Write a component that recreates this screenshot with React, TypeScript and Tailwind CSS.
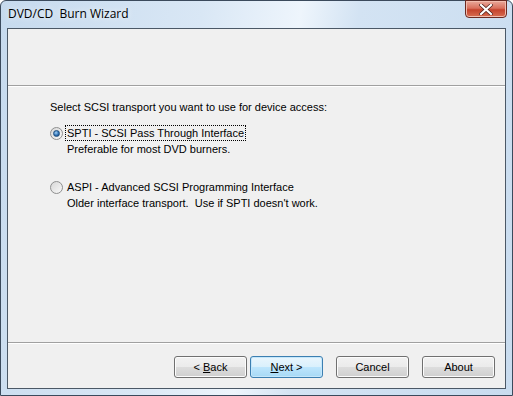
import { useState } from 'react';

type Choice = 'spti' | 'aspi';

const OPTIONS: { id: Choice; title: string; hint: string }[] = [
  {
    id: 'spti',
    title: 'SPTI - SCSI Pass Through Interface',
    hint: 'Preferable for most DVD burners.',
  },
  {
    id: 'aspi',
    title: 'ASPI - Advanced SCSI Programming Interface',
    hint: "Older interface transport.  Use if SPTI doesn't work.",
  },
];

function Radio({ checked }: { checked: boolean }) {
  return (
    <span className="relative flex h-[13px] w-[13px] shrink-0 items-center justify-center rounded-full border border-[#8e8f8f] bg-gradient-to-br from-[#d8d8d8] to-[#f8f8f8]">
      {checked && (
        <span className="h-[7px] w-[7px] rounded-full border border-[#1d4f7f] bg-[radial-gradient(circle_at_40%_35%,#9fd0f5,#2a6bb0_60%,#123e6b)]" />
      )}
    </span>
  );
}

function WizardButton({
  children,
  primary,
}: {
  children: React.ReactNode;
  primary?: boolean;
}) {
  return (
    <button
      className={`h-[22px] w-[73px] rounded-[3px] border text-[11px] text-black ${
        primary
          ? 'border-[#3c7fb1] bg-[linear-gradient(#eaf6fd_0%,#d9f0fc_50%,#bee6fd_50%,#a7d9f5_100%)] shadow-[inset_0_0_0_1px_#c5e7fb]'
          : 'border-[#707070] bg-[linear-gradient(#f2f2f2_0%,#ebebeb_50%,#dddddd_50%,#cfcfcf_100%)] shadow-[inset_0_0_0_1px_#fcfcfc]'
      }`}
    >
      {children}
    </button>
  );
}

export default function App() {
  const [choice, setChoice] = useState<Choice>('spti');

  return (
    <div className="h-[396px] w-[513px] overflow-hidden font-['Liberation_Sans',Arial,sans-serif]">
      <div className="flex h-full w-full flex-col rounded-t-[6px] border border-[#3b4a5c] bg-[linear-gradient(100deg,#c6daee_0%,#d9e7f5_35%,#eef5fc_52%,#d3e3f3_62%,#c9dcef_100%)] px-[6px] pb-[6px]">
        {/* Title bar */}
        <div className="flex h-[27px] items-start justify-between">
          <span className="pl-[1px] pt-[5px] font-['Open_Sans',sans-serif] text-[12px] leading-[16px] text-black [text-shadow:0_0_6px_#ffffff]">
            DVD/CD&nbsp; Burn Wizard
          </span>
          <div className="-mr-[1px] -mt-[1px] flex h-[18px] w-[42px] items-center justify-center rounded-b-[4px] border border-[#6b2a22] bg-[linear-gradient(#e9a99b_0%,#d9705d_45%,#c4432d_55%,#d86e52_100%)] shadow-[inset_0_0_0_1px_#f1bcae]">
            <svg width="14" height="11" viewBox="0 0 14 11">
              <path
                d="M2 1 L12 10 M12 1 L2 10"
                stroke="#4a1d17"
                strokeWidth="3.6"
                strokeLinecap="square"
              />
              <path
                d="M2 1 L12 10 M12 1 L2 10"
                stroke="#ffffff"
                strokeWidth="2.2"
                strokeLinecap="square"
              />
            </svg>
          </div>
        </div>

        {/* Client area */}
        <div className="flex flex-1 flex-col border border-[#4b5866] bg-[#f0f0f0] text-[11px] leading-[16px] text-black">
          {/* Header */}
          <div className="h-[57px] border-b border-[#a0a0a0]" />
          <div className="border-t border-white" />

          {/* Content */}
          <div className="flex flex-1 flex-col pl-[42px] pt-[12px]">
            <p>Select SCSI transport you want to use for device access:</p>

            <div className="mt-[11px] flex flex-col gap-[23px]">
              {OPTIONS.map((opt) => (
                <label
                  key={opt.id}
                  className="flex cursor-default flex-col"
                  onClick={() => setChoice(opt.id)}
                >
                  <div className="flex items-center gap-[3px]">
                    <Radio checked={choice === opt.id} />
                    <span
                      className={`px-[1px] leading-[14px] outline-offset-0 ${
                        choice === opt.id
                          ? 'outline outline-1 outline-dotted outline-black'
                          : ''
                      }`}
                    >
                      {opt.title}
                    </span>
                  </div>
                  <span className="whitespace-pre pl-[17px] pt-[1px]">
                    {opt.hint}
                  </span>
                </label>
              ))}
            </div>
          </div>

          {/* Footer */}
          <div className="border-b border-[#a0a0a0]" />
          <div className="border-t border-white" />
          <div className="flex h-[44px] items-start justify-end pr-[10px] pt-[12px]">
            <div className="flex gap-[3px]">
              <WizardButton>
                &lt; <u>B</u>ack
              </WizardButton>
              <WizardButton primary>
                <u>N</u>ext &gt;
              </WizardButton>
            </div>
            <div className="ml-[13px] flex gap-[13px]">
              <WizardButton>Cancel</WizardButton>
              <WizardButton>About</WizardButton>
            </div>
          </div>
        </div>
      </div>
    </div>
  );
}
